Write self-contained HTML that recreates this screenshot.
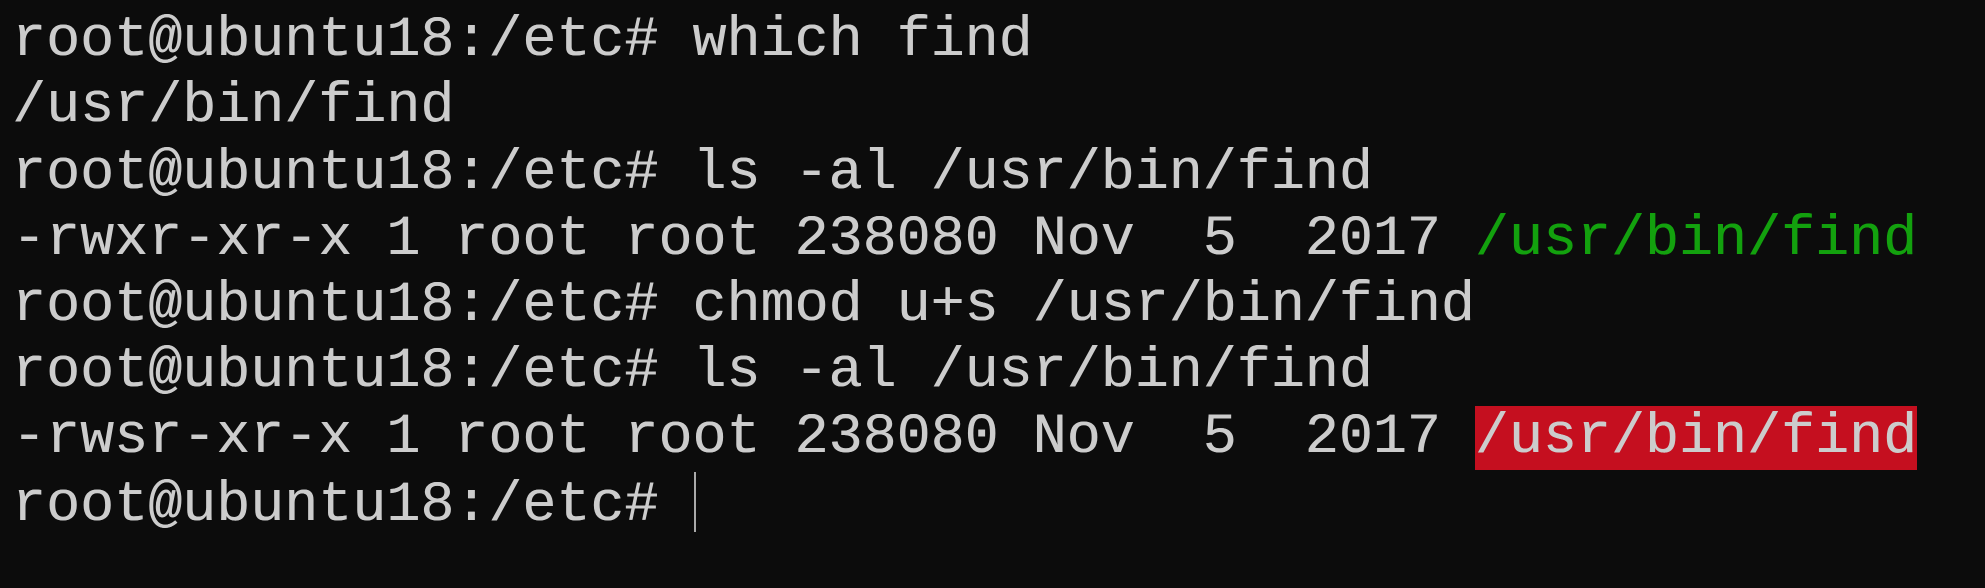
<!DOCTYPE html>
<html><head><meta charset="utf-8"><style>
html,body{margin:0;padding:0;background:#0c0c0c;width:1985px;height:588px;overflow:hidden}
pre{margin:0;position:absolute;left:12px;top:-58px;font-family:"Liberation Mono",monospace;font-size:56.7px;line-height:66.2px;color:#cccccc;white-space:pre;text-shadow:0.4px 0 0 currentColor}
.g{color:#13a10e}
.r{background:#c50f1f}
.c{display:inline-block;width:2px;height:60px;background:#aaaaaa;vertical-align:-12px;margin-left:2px}
</style></head><body>
<pre>

root@ubuntu18:/etc# which find
/usr/bin/find
root@ubuntu18:/etc# ls -al /usr/bin/find
-rwxr-xr-x 1 root root 238080 Nov  5  2017 <span class="g">/usr/bin/find</span>
root@ubuntu18:/etc# chmod u+s /usr/bin/find
root@ubuntu18:/etc# ls -al /usr/bin/find
-rwsr-xr-x 1 root root 238080 Nov  5  2017 <span class="r">/usr/bin/find</span>
root@ubuntu18:/etc# <span class="c"></span></pre>
</body></html>
